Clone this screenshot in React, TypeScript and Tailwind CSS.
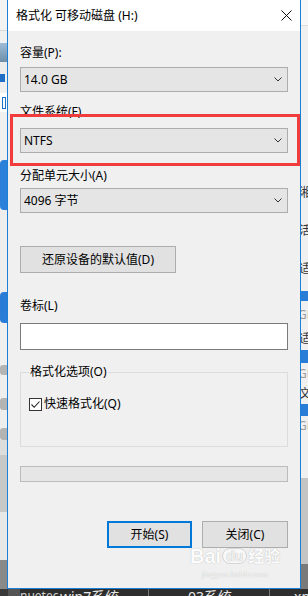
import React from "react";

const font = { fontFamily: '"Noto Sans", "Noto Sans CJK SC", sans-serif' };

function Chevron() {
  return (
    <svg width="8" height="5" viewBox="0 0 8 5" className="shrink-0">
      <path d="M0.5 0.5 L4 4 L7.5 0.5" fill="none" stroke="#333" strokeWidth="1" />
    </svg>
  );
}

function Combo({ value, mt }: { value: string; mt: string }) {
  return (
    <div
      className={`${mt} w-[268px] h-[25px] border border-[#adadad] bg-[#e5e5e5] flex items-center justify-between pl-[3px] pr-[5px]`}
    >
      <span className="text-[12px] leading-4 text-black">{value}</span>
      <Chevron />
    </div>
  );
}

function Label({ text, mt }: { text: string; mt: string }) {
  return <div className={`${mt} h-4 text-[12px] leading-4 text-black`}>{text}</div>;
}

export default function App() {
  return (
    <div className="relative w-[308px] h-[596px] overflow-hidden bg-[#f0f0f0] flex flex-col" style={font}>
      <div className="flex h-[589px]">
        {/* left background strip */}
        <div className="w-[7px] flex flex-col shrink-0">
          <div className="h-[30px] bg-[#f3f3f3]" />
          <div className="h-[1px] bg-[#d9d9d9]" />
          <div className="h-[12px] bg-[#f0f0f0]" />
          <div className="h-[19px] bg-gradient-to-b from-[#9fbbd8] to-[#6f8fa8]" />
          <div className="h-[12px] bg-[#ececec]" />
          <div className="h-[8px] w-[5px] bg-[#1f6fc8]" />
          <div className="h-[11px] bg-[#f0f0f0]" />
          <div className="h-[19px] bg-white flex items-center">
            <div className="w-[4px] h-[12px] ml-[2px] border border-[#1f6fc8]" />
          </div>
          <div className="h-[48px] bg-[#f0f0f0]" />
          <div className="h-[50px] bg-[#2b80d9] rounded-l-[4px]" />
          <div className="h-[82px] bg-[#eeeeee]" />
          <div className="h-[31px] bg-[#2a7dd6] rounded-l-[4px]" />
          <div className="h-[42px] bg-[#f0f0f0]" />
          <div className="h-[10px] bg-[#b4b4b4] rounded-l-[3px]" />
          <div className="h-[23px] bg-[#eeeeee]" />
          <div className="h-[12px] bg-[#b4b4b4] rounded-l-[3px]" />
          <div className="h-[18px] bg-[#eeeeee]" />
          <div className="h-[12px] bg-[#b4b4b4] rounded-l-[3px]" />
          <div className="h-[15px] bg-[#dddddd]" />
          <div className="h-[57px] bg-[#c8c8c8]" />
          <div className="h-[48px] bg-[#e8e8e8]" />
          <div className="flex-1 bg-[#8a8a8a]" />
        </div>

        {/* dialog */}
        <div className="w-[294px] shrink-0 flex flex-col border-x border-b border-[#1a7fd6] bg-[#f0f0f0]">
          <div className="h-[31px] bg-white flex items-center justify-between pl-[8px] pr-[8px]">
            <span className="text-[12px] leading-4 text-black">格式化 可移动磁盘 (H:)</span>
            <svg width="11" height="11" viewBox="0 0 11 11">
              <path d="M0.5 0.5 L10.5 10.5 M10.5 0.5 L0.5 10.5" stroke="#111" strokeWidth="1" />
            </svg>
          </div>
          <div className="flex flex-col pl-[12px]">
            <Label text="容量(P):" mt="mt-[14px]" />
            <Combo value="14.0 GB" mt="mt-[6px]" />
            <Label text="文件系统(F)" mt="mt-[12px]" />
            <Combo value="NTFS" mt="mt-[8px]" />
            <Label text="分配单元大小(A)" mt="mt-[15px]" />
            <Combo value="4096 字节" mt="mt-[4px]" />
            <button className="mt-[33px] w-[156px] h-[27px] border border-[#adadad] bg-[#e1e1e1] text-[12px] leading-4 text-black flex items-center justify-center">
              还原设备的默认值(D)
            </button>
            <Label text="卷标(L)" mt="mt-[25px]" />
            <div className="mt-[9px] w-[268px] h-[27px] border border-[#7a7a7a] bg-white" />
            <div className="mt-[22px] w-[268px] h-[75px] border border-[#dcdcdc] relative">
              <div className="absolute left-[8px] top-[-9px] px-[1px] bg-[#f0f0f0] text-[12px] leading-4 text-black">
                格式化选项(O)
              </div>
              <div className="mt-[23px] ml-[8px] flex items-center">
                <div className="w-[13px] h-[13px] border border-[#333] bg-white flex items-center justify-center">
                  <svg width="11" height="11" viewBox="0 0 11 11">
                    <path d="M1.5 5.5 L4.2 8.3 L9.5 2.5" fill="none" stroke="#222" strokeWidth="1.1" />
                  </svg>
                </div>
                <span className="ml-[2px] text-[12px] leading-4 text-black">快速格式化(Q)</span>
              </div>
            </div>
            <div className="mt-[19px] w-[268px] h-[16px] border border-[#bcbcbc] bg-[#e6e6e6]" />
            <div className="mt-[39px] w-[268px] flex justify-end gap-[10px]">
              <button className="w-[85px] h-[27px] border-2 border-[#0078d7] bg-[#e1e1e1] text-[12px] leading-4 text-black flex items-center justify-center">
                开始(S)
              </button>
              <button className="w-[86px] h-[27px] border border-[#adadad] bg-[#e1e1e1] text-[12px] leading-4 text-black flex items-center justify-center">
                关闭(C)
              </button>
            </div>
          </div>
        </div>

        {/* right background strip */}
        <div className="w-[7px] shrink-0 flex flex-col overflow-hidden text-[12px] leading-4 whitespace-nowrap">
          <div className="h-[25px] shrink-0 bg-[#f7f7f7]" />
          <div className="h-[1px] shrink-0 bg-[#dcdcdc]" />
          <div className="h-[159px] shrink-0 bg-[#f0f0f0]" />
          <div className="h-[16px] shrink-0 -ml-[2px] text-[#333]">湘</div>
          <div className="h-[22px] shrink-0" />
          <div className="h-[16px] shrink-0 -ml-[2px] text-[#333]">活</div>
          <div className="h-[22px] shrink-0" />
          <div className="h-[16px] shrink-0 -ml-[2px] text-[#333]">适</div>
          <div className="h-[14px] shrink-0" />
          <div className="h-[10px] shrink-0 bg-[#2a7dd6]" />
          <div className="h-[6px] shrink-0" />
          <div className="h-[16px] shrink-0 -ml-[3px] text-[#999]">GB</div>
          <div className="h-[8px] shrink-0" />
          <div className="h-[16px] shrink-0 -ml-[2px] text-[#333]">适</div>
          <div className="h-[3px] shrink-0" />
          <div className="h-[13px] shrink-0 bg-[#2a7dd6]" />
          <div className="h-[3px] shrink-0" />
          <div className="h-[16px] shrink-0 -ml-[3px] text-[#999]">GB</div>
          <div className="h-[4px] shrink-0" />
          <div className="h-[16px] shrink-0 -ml-[2px] text-[#333]">文件</div>
          <div className="h-[2px] shrink-0" />
          <div className="h-[12px] shrink-0 bg-[#2a7dd6]" />
          <div className="h-[2px] shrink-0" />
          <div className="h-[16px] shrink-0 -ml-[3px] text-[#999]">GB</div>
          <div className="h-[44px] shrink-0 bg-[#f0f0f0]" />
          <div className="h-[86px] shrink-0 bg-[#c4c4c4]" />
          <div className="flex-1 bg-[#7a7a7a]" />
        </div>
      </div>

      {/* bottom taskbar strip */}
      <div className="h-[7px] bg-[#2e2e2e] flex items-start overflow-hidden text-[14px] leading-[14px] text-[#e8e8e8] whitespace-nowrap">
        <div className="w-[8px] h-[7px] bg-[#3a3a3a] shrink-0" />
        <div className="w-[12px] h-[7px] bg-[#555] shrink-0" />
        <span className="w-[40px] shrink-0 overflow-hidden pt-[1px] text-[12px] leading-[12px] text-[#cfcfcf]">nuetec</span>
        <span className="w-[70px] shrink-0 pt-[1px]">win7系统</span>
        <div className="ml-[18px] w-[1px] h-[7px] bg-[#777] shrink-0" />
        <span className="ml-[39px] w-[50px] shrink-0 pt-[1px]">03系统</span>
        <div className="ml-[31px] w-[1px] h-[7px] bg-[#777] shrink-0" />
        <span className="ml-[24px] pt-[1px]">xp</span>
      </div>

      {/* red highlight rectangle */}
      <div className="absolute left-[10px] top-[114px] w-[290px] h-[52px] border-[3px] border-[#f03c3c] pointer-events-none" />

      {/* baidu watermark */}
      <div className="absolute left-[190px] top-[546px] flex flex-col items-center pointer-events-none opacity-80">
        <div className="flex items-center text-white [text-shadow:0_0_1px_#9a9a9a] font-bold leading-none">
          <span className="text-[20px]" style={{ fontFamily: '"Liberation Sans", sans-serif' }}>Bai</span>
          <span className="mx-[1px] px-[3px] rounded-full text-[14px] border border-[#cfcfcf] bg-white/70 text-[#f0f0f0]" style={{ fontFamily: '"Liberation Sans", sans-serif' }}>du</span>
          <span className="text-[16px]">经验</span>
        </div>
        <div className="mt-[3px] text-[9px] leading-[10px] text-white [text-shadow:0_0_1px_#9a9a9a]" style={{ fontFamily: '"Liberation Serif", serif' }}>
          jingyan.baidu.com
        </div>
      </div>
    </div>
  );
}
